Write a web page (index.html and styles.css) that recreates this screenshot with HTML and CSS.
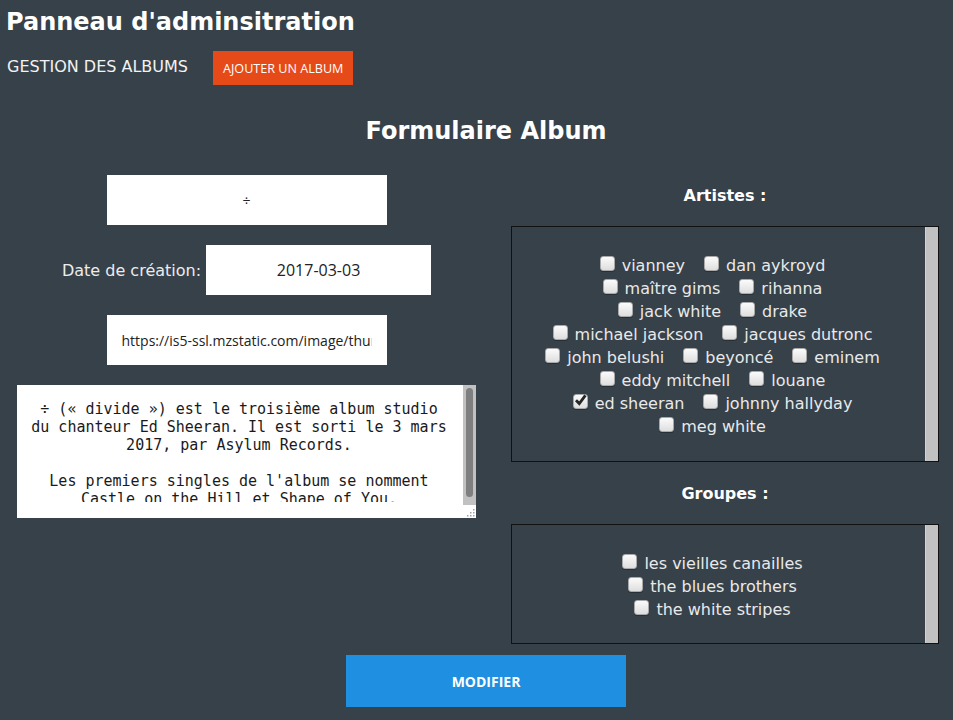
FILE: index.html
```html
<!DOCTYPE html>
<html lang="fr">
<head>
<meta charset="utf-8">
<title>Panneau d'adminsitration</title>
<link rel="stylesheet" href="styles.css">
</head>
<body>
<header class="top">
  <h1 class="site-title">Panneau d'adminsitration</h1>
  <nav class="nav">
    <span class="nav-link">GESTION DES ALBUMS</span>
    <button class="btn-add" type="button">AJOUTER UN ALBUM</button>
  </nav>
</header>
<main class="form-page">
  <h2 class="form-title">Formulaire Album</h2>
  <form class="album-form">
    <div class="form-grid">
      <div class="col-left">
        <input class="field field-title" type="text" value="÷">
        <div class="date-row">
          <label class="date-label">Date de création:</label>
          <input class="field field-date" type="text" value="2017-03-03">
        </div>
        <input class="field field-url" type="text" value="https://is5-ssl.mzstatic.com/image/thumb/Music111/v4/2d/7c/6b/source/600x600bb.jpg">
        <div class="desc">
          <textarea class="desc-text">÷ (« divide ») est le troisième album studio du chanteur Ed Sheeran. Il est sorti le 3 mars 2017, par Asylum Records.

Les premiers singles de l'album se nomment Castle on the Hill et Shape of You.</textarea>
          <div class="vscroll"><div class="vthumb"></div></div>
          <div class="grip">
            <svg width="13" height="13" viewBox="0 0 13 13"><g fill="#a0a0a0"><rect x="10" y="4" width="1.5" height="1.5"/><rect x="7" y="7" width="1.5" height="1.5"/><rect x="10" y="7" width="1.5" height="1.5"/><rect x="4" y="10" width="1.5" height="1.5"/><rect x="7" y="10" width="1.5" height="1.5"/><rect x="10" y="10" width="1.5" height="1.5"/></g></svg>
          </div>
        </div>
      </div>
      <div class="col-right">
        <h3 class="sel-title">Artistes :</h3>
        <div class="sel-box sel-artists">
          <div class="opts">
            <label class="opt"><span class="cb"></span>vianney</label>
            <label class="opt"><span class="cb"></span>dan aykroyd</label>
            <label class="opt"><span class="cb"></span>maître gims</label>
            <label class="opt"><span class="cb"></span>rihanna</label>
            <label class="opt"><span class="cb"></span>jack white</label>
            <label class="opt"><span class="cb"></span>drake</label>
            <label class="opt"><span class="cb"></span>michael jackson</label>
            <label class="opt"><span class="cb"></span>jacques dutronc</label>
            <label class="opt"><span class="cb"></span>john belushi</label>
            <label class="opt"><span class="cb"></span>beyoncé</label>
            <label class="opt"><span class="cb"></span>eminem</label>
            <label class="opt"><span class="cb"></span>eddy mitchell</label>
            <label class="opt"><span class="cb"></span>louane</label>
            <label class="opt"><span class="cb cb-on"><svg width="15" height="15" viewBox="0 0 15 15"><path d="M3 7.2 L6.3 10.6 L12.4 2.4" fill="none" stroke="#262626" stroke-width="2.8"/></svg></span>ed sheeran</label>
            <label class="opt"><span class="cb"></span>johnny hallyday</label>
            <label class="opt"><span class="cb"></span>meg white</label>
          </div>
          <div class="vbar"></div>
        </div>
        <h3 class="sel-title sel-title-groups">Groupes :</h3>
        <div class="sel-box sel-groups">
          <div class="opts">
            <label class="opt"><span class="cb"></span>les vieilles canailles</label>
            <label class="opt"><span class="cb"></span>the blues brothers</label>
            <label class="opt"><span class="cb"></span>the white stripes</label>
          </div>
          <div class="vbar"></div>
        </div>
      </div>
    </div>
    <div class="submit-row">
      <button class="btn-submit" type="button">MODIFIER</button>
    </div>
  </form>
</main>
</body>
</html>
```
FILE: styles.css
```css
* { box-sizing: border-box; }
html { background: #36414a; }
body {
  margin: 0;
  width: 953px;
  background: #36414a;
  color: #ffffff;
  font-family: "DejaVu Sans", "Liberation Sans", sans-serif;
}

.top { padding: 8px 0 0 6px; }
.site-title {
  margin: 0;
  font-size: 24px;
  line-height: 28px;
  font-weight: bold;
  color: #ffffff;
}
.nav {
  display: flex;
  align-items: center;
  gap: 25px;
  margin: 15px 0 0 1px;
}
.nav-link {
  font-size: 16px;
  color: #f2f2f2;
  margin-bottom: 3px;
}
.btn-add {
  height: 34px;
  padding: 0 10px;
  border: 0;
  background: #e64a19;
  color: #ffffff;
  font-family: "Open Sans", "Liberation Sans", sans-serif;
  font-size: 12.6px;
}

.form-title {
  margin: 32px 0 0;
  padding-left: 19px;
  font-size: 24px;
  line-height: 28px;
  font-weight: bold;
  text-align: center;
}

.form-grid {
  margin-top: 30px;
  padding-left: 17px;
  display: grid;
  grid-template-columns: 459px 428px;
  column-gap: 35px;
  align-items: start;
}

.col-left {
  display: flex;
  flex-direction: column;
  align-items: center;
  gap: 20px;
}
.field {
  height: 50px;
  border: 0;
  outline: none;
  background: #ffffff;
  color: #222222;
  text-align: center;
  font-family: "Open Sans", "Liberation Sans", sans-serif;
  font-size: 14px;
  padding: 0 15px;
}
.field-title, .field-url { width: 280px; }
.field-date { width: 225px; font-size: 16px; }
.date-row {
  display: flex;
  align-items: center;
  gap: 5px;
}
.date-label {
  font-size: 16px;
  color: #ececec;
}

.desc {
  width: 459px;
  height: 133px;
  background: #ffffff;
  display: grid;
  grid-template-columns: 446px 13px;
  grid-template-rows: 120px 13px;
}
.desc-text {
  grid-row: 1 / span 2;
  grid-column: 1;
  align-self: start;
  width: 446px;
  height: 117px;
  margin: 0;
  border: 0;
  outline: none;
  resize: none;
  overflow: hidden;
  padding: 15px 15px 0 13px;
  background: #ffffff;
  color: #1a1a1a;
  font-family: "DejaVu Sans Mono", "Liberation Mono", monospace;
  font-size: 15px;
  line-height: 18px;
  text-align: center;
}
.vscroll {
  grid-row: 1;
  grid-column: 2;
  background: #c1c1c1;
  padding: 3px;
}
.vthumb {
  height: 109px;
  border-radius: 4px;
  background: #7f7f7f;
}
.grip {
  grid-row: 2;
  grid-column: 2;
  background: #ffffff;
}
.grip svg { display: block; }

.col-right { padding-top: 11px; }
.sel-title {
  margin: 0 0 21px;
  font-size: 16px;
  line-height: 19px;
  font-weight: bold;
  text-align: center;
  color: #ffffff;
}
.sel-title-groups { margin-top: 22px; }
.sel-box {
  display: flex;
  border: 1px solid #111111;
  height: 236px;
}
.sel-groups { height: 120px; }
.opts {
  flex: 1;
  padding: 27px 43px 0 31px;
  display: flex;
  flex-wrap: wrap;
  justify-content: center;
  align-content: flex-start;
  column-gap: 19px;
}
.opt {
  font-size: 16px;
  line-height: 23px;
  color: #e9e9e9;
  white-space: nowrap;
}
.cb {
  display: inline-block;
  width: 15px;
  height: 15px;
  margin-right: 7px;
  vertical-align: baseline;
  border: 1px solid #a9a9a9;
  border-radius: 3px;
  background: linear-gradient(#fbfbfb, #dedede);
  box-shadow: 0 1px 0 rgba(0, 0, 0, 0.25);
  position: relative;
}
.cb-on svg {
  position: absolute;
  left: -1px;
  top: -2px;
}
.vbar {
  width: 13px;
  background: #c1c1c1;
  border-left: 1px solid #d2d2d2;
}

.submit-row {
  padding-left: 19px;
  margin-top: 11px;
}
.btn-submit {
  display: block;
  margin: 0 auto;
  width: 280px;
  height: 52px;
  border: 0;
  background: #1e8fe1;
  color: #ffffff;
  font-family: "Open Sans", "Liberation Sans", sans-serif;
  font-size: 14px;
  font-weight: bold;
}
```
